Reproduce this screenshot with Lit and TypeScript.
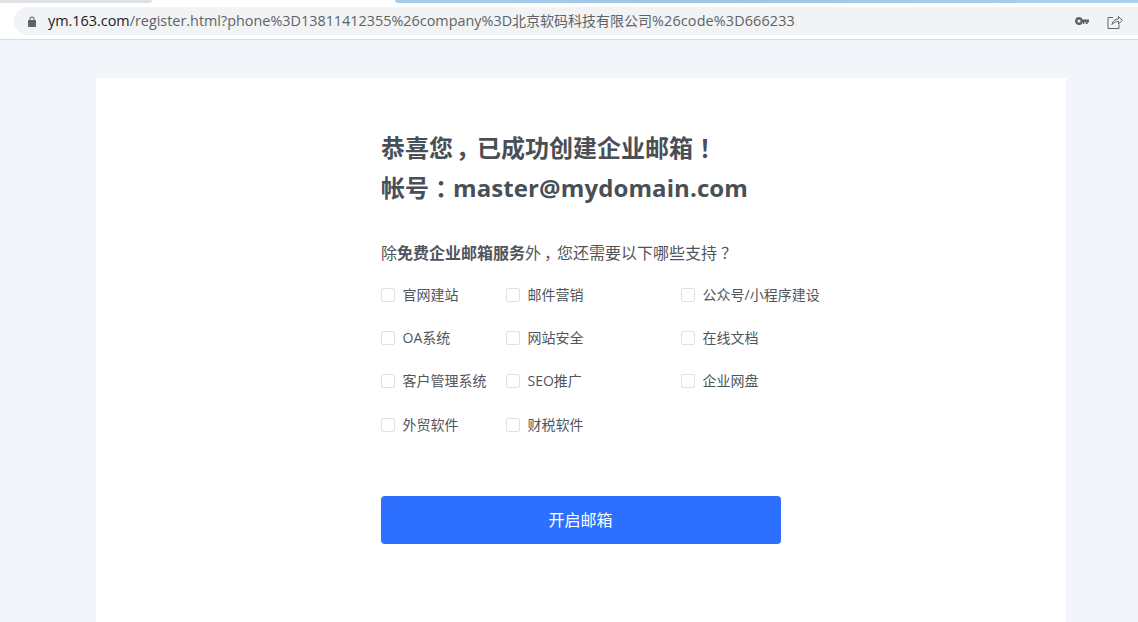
import { LitElement, html, css } from "lit";
import { customElement } from "lit/decorators.js";

const ROWS = [
  ["官网建站", "邮件营销", "公众号/小程序建设"],
  ["OA系统", "网站安全", "在线文档"],
  ["客户管理系统", "SEO推广", "企业网盘"],
  ["外贸软件", "财税软件", ""],
];

@customElement("app-root")
export class AppRoot extends LitElement {
  static styles = css`
    :host {
      display: block;
      width: 1138px;
      height: 622px;
      overflow: hidden;
      background: #f2f5f9;
      font-family: "Open Sans", "Noto Sans CJK SC", sans-serif;
      color: #50555c;
    }
    .tabs {
      height: 7px;
      display: flex;
      justify-content: space-between;
      align-items: flex-start;
      background: #fff;
    }
    .tab-left {
      width: 152px;
      height: 3px;
      background: #dee1e6;
      border-radius: 0 0 6px 0;
    }
    .tab-right {
      width: 743px;
      height: 3px;
      background: linear-gradient(90deg, #a9cdec, #9fc4e6 40%, #aecff0);
      border-radius: 0 0 0 6px;
    }
    .toolbar {
      height: 32px;
      background: #fff;
      border-bottom: 1px solid #dadce0;
      padding-left: 14px;
    }
    .omni {
      height: 28px;
      background: #f1f3f4;
      border-radius: 14px 0 0 14px;
      display: flex;
      align-items: center;
      font-size: 14.4px;
    }
    .lock {
      margin-left: 14px;
      width: 8px;
      height: 11px;
      flex: none;
    }
    .url {
      margin-left: 12px;
      padding-bottom: 3px;
      color: #5f6368;
      white-space: nowrap;
      flex: 1;
    }
    .url b {
      font-weight: 400;
      color: #202124;
    }
    .url i {
      font-style: normal;
      font-size: 14px;
    }
    .url u {
      text-decoration: none;
      letter-spacing: 0.13px;
    }
    .key {
      width: 14px;
      height: 8px;
      flex: none;
      margin-right: 1px;
    }
    .share {
      width: 16px;
      height: 15px;
      flex: none;
      margin: 0 15px 0 17px;
    }
    .card {
      width: 970px;
      height: 544px;
      margin: 38px 0 0 96px;
      background: #fff;
      padding: 50px 0 0 285px;
      box-sizing: border-box;
    }
    h1 {
      margin: 0;
      font-size: 24px;
      line-height: 40px;
      font-weight: 700;
      color: #4a4f55;
    }
    h1 em {
      font-style: normal;
      letter-spacing: 0.1px;
    }
    .p {
      display: inline-block;
      width: 1em;
      text-align: center;
      font-feature-settings: "palt";
      white-space: nowrap;
    }
    .q {
      margin: 33px 0 0;
      font-size: 16px;
      line-height: 24px;
    }
    .q b {
      font-weight: 700;
    }
    .grid {
      margin-top: 8px;
      display: grid;
      grid-template-columns: 125px 175px auto;
      grid-auto-rows: 43.33px;
      width: 480px;
    }
    .item {
      display: flex;
      align-items: center;
      font-size: 14px;
    }
    .box {
      width: 12px;
      height: 12px;
      border: 1px solid #dfe1e8;
      border-radius: 2px;
      margin-right: 7.5px;
      background: #fff;
    }
    .label {
      padding-bottom: 2px;
    }
    .btn {
      display: block;
      margin-top: 50px;
      width: 400px;
      height: 48px;
      padding: 0 1px 2px 0;
      border: 0;
      border-radius: 4px;
      background: #2d70ff;
      color: #fff;
      font: inherit;
      font-size: 16px;
    }
  `;

  render() {
    return html`
      <div class="tabs"><div class="tab-left"></div><div class="tab-right"></div></div>
      <div class="toolbar">
        <div class="omni">
          <svg class="lock" viewBox="0 0 8 11">
            <path fill="#5f6368" d="M1.5 4V3a2.5 2.5 0 0 1 5 0v1H7a1 1 0 0 1 1 1v5a1 1 0 0 1-1 1H1a1 1 0 0 1-1-1V5a1 1 0 0 1 1-1zm1 0h3V3a1.5 1.5 0 0 0-3 0z" />
          </svg>
          <span class="url"><b>ym.163.com</b>/register.html?phone%3D13811412355%26company%3D<i>北京软码科技有限公司</i><u>%26code%3D666233</u></span>
          <svg class="key" viewBox="0 0 14 8">
            <path fill="#5f6368" fill-rule="evenodd" d="M4 0a4 4 0 0 1 3.8 2.5H14v2.8h-1.3V7h-2V5.300H9.300V7H8V5.500H7.800A4 4 0 1 1 4 0zm0 2.500a1.500 1.500 0 1 0 0 3 1.500 1.500 0 0 0 0-3z" />
          </svg>
          <svg class="share" viewBox="0 0 16 15" fill="none" stroke="#5f6368" stroke-width="1">
            <path d="M6 3.500H1v11h11v-4" />
            <path d="M5 10.500c.5-3.500 3-5.500 6.500-5.500V2.500L15.300 6.300 11.500 10V7.500C9 7.500 6.500 8.500 5 10.500z" />
          </svg>
        </div>
      </div>
      <div class="card">
        <h1>恭喜您<span class="p">，</span>已成功创建企业邮箱<span class="p">！</span></h1>
        <h1>帐号<span class="p">：</span><em>master@mydomain.com</em></h1>
        <p class="q">除<b>免费企业邮箱服务</b>外<span class="p">，</span>您还需要以下哪些支持<span class="p">？</span></p>
        <div class="grid">
          ${ROWS.flat().map((t) =>
            t ? html`<div class="item"><span class="box"></span><span class="label">${t}</span></div>` : html`<div></div>`
          )}
        </div>
        <button class="btn">开启邮箱</button>
      </div>
    `;
  }
}
